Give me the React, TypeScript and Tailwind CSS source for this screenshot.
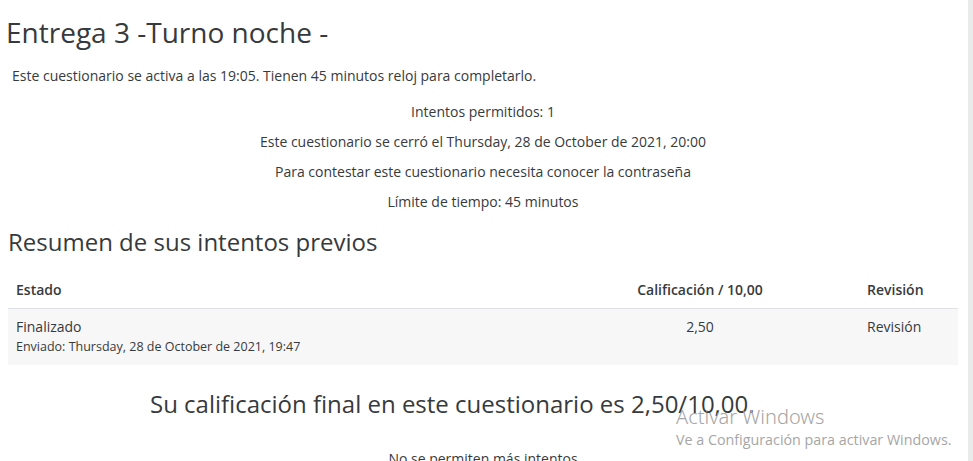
export default function App() {
  return (
    <div
      className="relative flex h-[461px] w-[973px] overflow-hidden bg-white text-[#373a3c]"
      style={{ fontFamily: '"Open Sans", "Noto Sans", sans-serif' }}
    >
      <div className="flex w-[968px] flex-col pl-[8px] pr-[10px]">
        <h2 className="-ml-[2px] mt-[14px] text-[28px] leading-[36px] text-[#373a3c]">Entrega 3 -Turno noche -</h2>

        <p className="mt-[16px] pl-[4px] text-[14px] leading-[20px]">
          Este cuestionario se activa a las 19:05. Tienen 45 minutos reloj para completarlo.
        </p>

        <div className="mt-[16px] flex flex-col items-center gap-[10px] text-[14px] leading-[20px]">
          <p>Intentos permitidos: 1</p>
          <p>Este cuestionario se cerró el Thursday, 28 de October de 2021, 20:00</p>
          <p>Para contestar este cuestionario necesita conocer la contraseña</p>
          <p>Límite de tiempo: 45 minutos</p>
        </div>

        <h3 className="mt-[14px] text-[24px] leading-[32px]">Resumen de sus intentos previos</h3>

        <table className="mt-[14px] w-[950px] text-[14px]">
          <thead>
            <tr className="border-b border-[#dee2e6]">
              <th className="h-[36px] pl-[8px] text-left font-semibold">Estado</th>
              <th className="w-[218px] text-center font-semibold">Calificación / 10,00</th>
              <th className="w-[149px] pl-[58px] text-left font-semibold">Revisión</th>
            </tr>
          </thead>
          <tbody>
            <tr className="bg-[#f7f7f7] align-top">
              <td className="h-[57px] pl-[8px] pt-[8px]">
                <div className="leading-[20px]">Finalizado</div>
                <div className="text-[12.5px] leading-[20px]">Enviado: Thursday, 28 de October de 2021, 19:47</div>
              </td>
              <td className="pt-[8px] text-center leading-[20px]">2,50</td>
              <td className="pl-[58px] pt-[8px] leading-[20px]">Revisión</td>
            </tr>
          </tbody>
        </table>

        <h3 className="mt-[23px] pl-[142px] text-[24px] leading-[32px]">
          Su calificación final en este cuestionario es 2,50/10,00.
        </h3>

        <p className="mt-[29px] text-center text-[14px] leading-[20px]">No se permiten más intentos</p>
      </div>

      <div className="w-[5px] bg-[#e8ebe9]" />

      <div className="pointer-events-none absolute left-[676px] top-[404px] text-[#a6a6a6]">
        <div className="text-[20px] leading-[26px]" style={{ fontFamily: '"Noto Sans", sans-serif', fontWeight: 300 }}>
          Activar Windows
        </div>
        <div className="mt-[1px] text-[14.3px] leading-[18px]">Ve a Configuración para activar Windows.</div>
      </div>
    </div>
  );
}
